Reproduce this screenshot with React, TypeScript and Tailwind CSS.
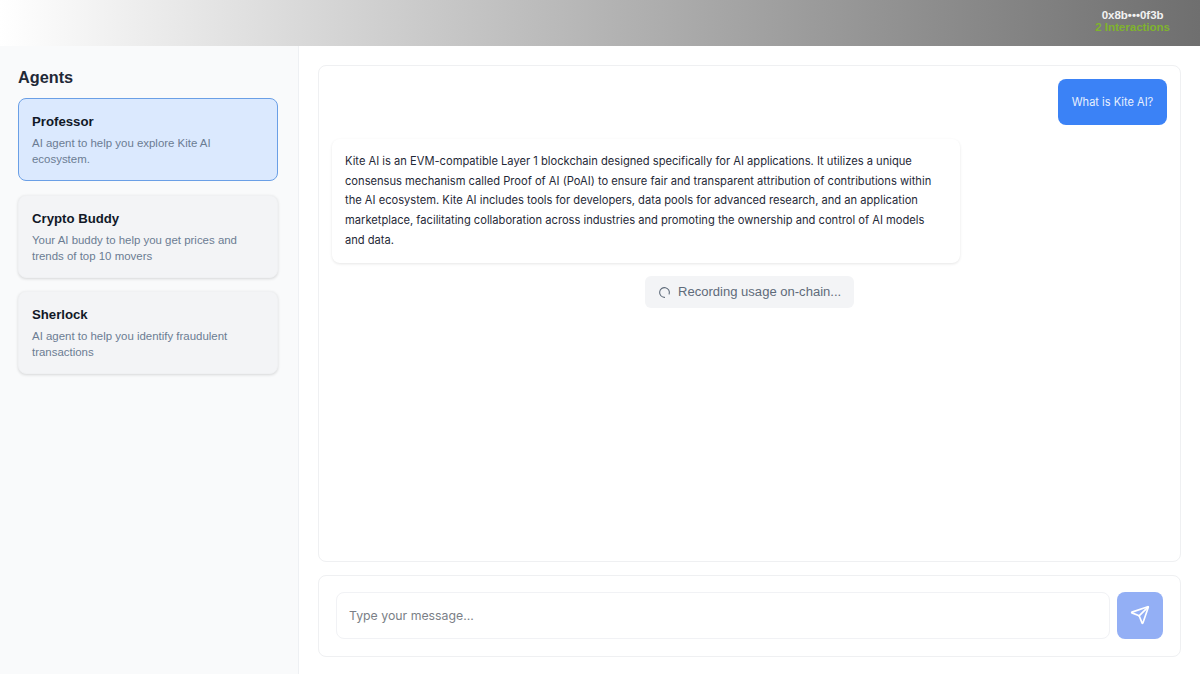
import { LoaderCircle, Send } from "lucide-react";

const agents = [
  { name: "Professor", desc: "AI agent to help you explore Kite AI ecosystem.", active: true },
  { name: "Crypto Buddy", desc: "Your AI buddy to help you get prices and trends of top 10 movers", active: false },
  { name: "Sherlock", desc: "AI agent to help you identify fraudulent transactions", active: false },
];

function AgentCard({ name, desc, active }: { name: string; desc: string; active: boolean }) {
  return (
    <div
      className={
        active
          ? "h-[83px] rounded-lg border border-[#6a9fe6] bg-[#dbe9fe] px-[13px] pt-[14px]"
          : "h-[83px] rounded-lg border border-[#f0f1f3] bg-[#f3f4f6] px-[13px] pt-[14px] shadow-[0_1px_3px_rgba(0,0,0,0.14)]"
      }
    >
      <h3 className="text-[13.2px] leading-[18px] font-bold text-[#111827]">{name}</h3>
      <p className="mt-[4px] text-[11.45px] leading-[16px] text-[#6b7c93]">{desc}</p>
    </div>
  );
}

export default function App() {
  return (
    <div className="flex h-[674px] w-[1200px] flex-col overflow-hidden bg-white font-['Liberation_Sans',Arial,sans-serif]">
      <header className="flex h-[46px] shrink-0 justify-end bg-gradient-to-r from-white to-[#6f6f6f] pr-[30px]">
        <div className="flex flex-col items-center pt-[9px] text-[11.5px] leading-[12px] font-bold">
          <span className="text-[#f2f2f2]">0x8b•••0f3b</span>
          <span className="text-[#7fb32e]">2 Interactions</span>
        </div>
      </header>

      <div className="flex min-h-0 flex-1">
        <aside className="w-[299px] shrink-0 border-r border-[#eef0f3] bg-[#f9fafb] px-[18px] pt-[21px]">
          <h2 className="text-[16.3px] leading-[20px] font-bold text-[#1f2937]">Agents</h2>
          <div className="mt-[11px] flex w-[260px] flex-col gap-[13.5px]">
            {agents.map((a) => (
              <AgentCard key={a.name} {...a} />
            ))}
          </div>
        </aside>

        <main className="flex min-w-0 flex-1 flex-col gap-[13px] pt-[19px] pr-[19px] pb-[17px] pl-[19px]">
          <section className="flex h-[497px] flex-col rounded-lg border border-[#eff0f2] bg-white px-[13px] pt-[13px] font-['Inter',sans-serif]">
            <div className="flex justify-end">
              <div className="flex h-[46px] w-[109px] items-center justify-center rounded-lg bg-[#3b82f6] text-[11.05px] text-[#e8f0fe]">
                What is Kite AI?
              </div>
            </div>
            <div className="mt-[14px] h-[124px] w-[628px] rounded-lg bg-white px-[13px] pt-[13px] text-[11.15px] leading-[19.7px] text-[#1f2937] shadow-[0_1px_3px_rgba(0,0,0,0.1)]">
              Kite AI is an EVM-compatible Layer 1 blockchain designed specifically for AI applications. It utilizes a unique
              consensus mechanism called Proof of AI (PoAI) to ensure fair and transparent attribution of contributions within
              the AI ecosystem. Kite AI includes tools for developers, data pools for advanced research, and an application
              marketplace, facilitating collaboration across industries and promoting the ownership and control of AI models
              and data.
            </div>
            <div className="mt-[13px] flex justify-center">
              <div className="flex h-[32px] w-[209px] items-center gap-[7px] rounded-md bg-[#f3f4f6] pl-[13px] font-['Liberation_Sans',Arial,sans-serif] text-[13.05px] text-[#5f6b7a]">
                <LoaderCircle className="h-[13px] w-[13px] rotate-90" strokeWidth={2} />
                Recording usage on-chain...
              </div>
            </div>
          </section>

          <section className="flex h-[82px] items-center gap-[7px] rounded-lg border border-[#eff0f2] bg-white pr-[17px] pb-[2px] pl-[17px]">
            <input
              readOnly
              placeholder="Type your message..."
              className="h-[47px] min-w-0 flex-1 rounded-lg border border-[#f1f2f5] bg-white px-[12px] font-['Inter',sans-serif] text-[12.3px] outline-none placeholder:text-[#7b7f87]"
            />
            <button className="flex h-[47px] w-[46px] shrink-0 items-center justify-center rounded-lg bg-[#93aff5] text-white">
              <Send className="h-[20px] w-[20px]" strokeWidth={2} />
            </button>
          </section>
        </main>
      </div>
    </div>
  );
}
